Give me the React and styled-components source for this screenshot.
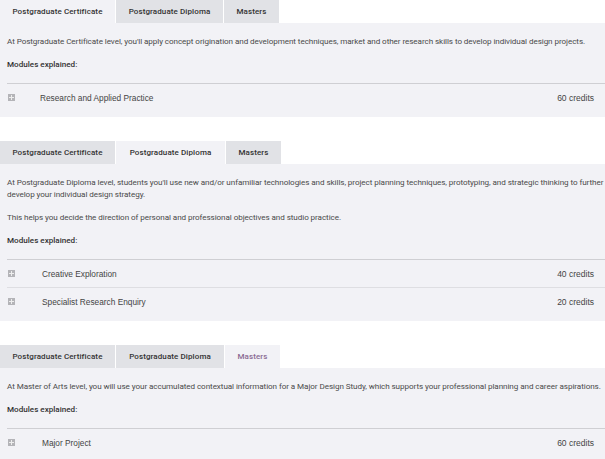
import React from 'react';
import styled, { createGlobalStyle } from 'styled-components';

const Global = createGlobalStyle`
	html, body {
		margin: 0;
		padding: 0;
		background: #fff;
		overflow: hidden;
	}
	body {
		font-family: Roboto, "Liberation Sans", sans-serif;
	}
`;

const Page = styled.div`
	width: 612px;
	display: flex;
	flex-direction: column;
	gap: 24px;
`;

const Section = styled.section`
	display: flex;
	flex-direction: column;
`;

const Tabs = styled.div`
	display: flex;
	gap: 1px;
	height: 23px;
`;

const Tab = styled.div`
	width: ${(props) => props.w}px;
	display: flex;
	align-items: center;
	justify-content: center;
	font-size: 8px;
	font-weight: 500;
	letter-spacing: 0.1px;
	color: ${(props) => (props.active && props.accent ? '#8b6b93' : '#333')};
	background-color: ${(props) => (props.active ? '#f2f2f6' : '#e1e2e6')};
`;

const Panel = styled.div`
	background-color: #f2f2f6;
	padding: 12px 0 6px 7px;
`;

const Text = styled.p`
	margin: 0 0 11px;
	font-size: 8.1px;
	line-height: 12px;
	color: #4a4a4a;
	letter-spacing: -0.07px;
`;

const Label = styled.p`
	margin: 0 0 13px;
	font-size: 8.1px;
	font-weight: 500;
	line-height: 12px;
	color: #333;
`;

const List = styled.div`
	border-top: 1.5px solid #cfcfd3;
`;

const Row = styled.div`
	display: flex;
	align-items: center;
	height: 27px;
	border-top: ${(props) => (props.first ? 'none' : '1px solid #dedee2')};
	font-family: "Liberation Sans", Arial, sans-serif;
	font-size: 8.3px;
	color: #444;
`;

const Plus = styled.span`
	width: 7px;
	height: 7px;
	margin-left: 1px;
	background: #b4b4b8;
	position: relative;
	flex: none;
	&::before,
	&::after {
		content: '';
		position: absolute;
		background: #eee;
	}
	&::before {
		left: 1px;
		right: 1px;
		top: 3px;
		height: 1px;
	}
	&::after {
		top: 1px;
		bottom: 1px;
		left: 3px;
		width: 1px;
	}
`;

const Name = styled.span`
	margin-left: ${(props) => props.indent}px;
	flex: 1;
`;

const Credits = styled.span`
	width: 60px;
	padding-right: 18px;
	text-align: right;
	font-size: 8.5px;
`;

const TAB_NAMES = ['Postgraduate Certificate', 'Postgraduate Diploma', 'Masters'];

const sections = [
	{
		active: 0,
		widths: [115, 107, 55],
		paragraphs: [
			"At Postgraduate Certificate level, you'll apply concept origination and development techniques, market and other research skills to develop individual design projects.",
		],
		modules: [['Research and Applied Practice', '60 credits']],
		indent: 25,
	},
	{
		active: 1,
		widths: [115, 109, 55],
		paragraphs: [
			"At Postgraduate Diploma level, students you'll use new and/or unfamiliar technologies and skills, project planning techniques, prototyping, and strategic thinking to further develop your individual design strategy.",
			'This helps you decide the direction of personal and professional objectives and studio practice.',
		],
		modules: [
			['Creative Exploration', '40 credits'],
			['Specialist Research Enquiry', '20 credits'],
		],
		indent: 27,
	},
	{
		active: 2,
		widths: [115, 108, 55],
		paragraphs: [
			'At Master of Arts level, you will use your accumulated contextual information for a Major Design Study, which supports your professional planning and career aspirations.',
		],
		modules: [['Major Project', '60 credits']],
		indent: 27,
	},
];

const App = () => {
	return (
		<>
			<Global />
			<Page>
				{sections.map((s, i) => (
					<Section key={i}>
						<Tabs>
							{TAB_NAMES.map((t, j) => (
								<Tab key={t} w={s.widths[j]} active={s.active === j} accent={j === 2}>
									{t}
								</Tab>
							))}
						</Tabs>
						<Panel>
							{s.paragraphs.map((p) => (
								<Text key={p}>{p}</Text>
							))}
							<Label>Modules explained:</Label>
							<List>
								{s.modules.map(([name, credits], k) => (
									<Row key={name} first={k === 0}>
										<Plus />
										<Name indent={s.indent}>{name}</Name>
										<Credits>{credits}</Credits>
									</Row>
								))}
							</List>
						</Panel>
					</Section>
				))}
			</Page>
		</>
	);
};

export default App;
